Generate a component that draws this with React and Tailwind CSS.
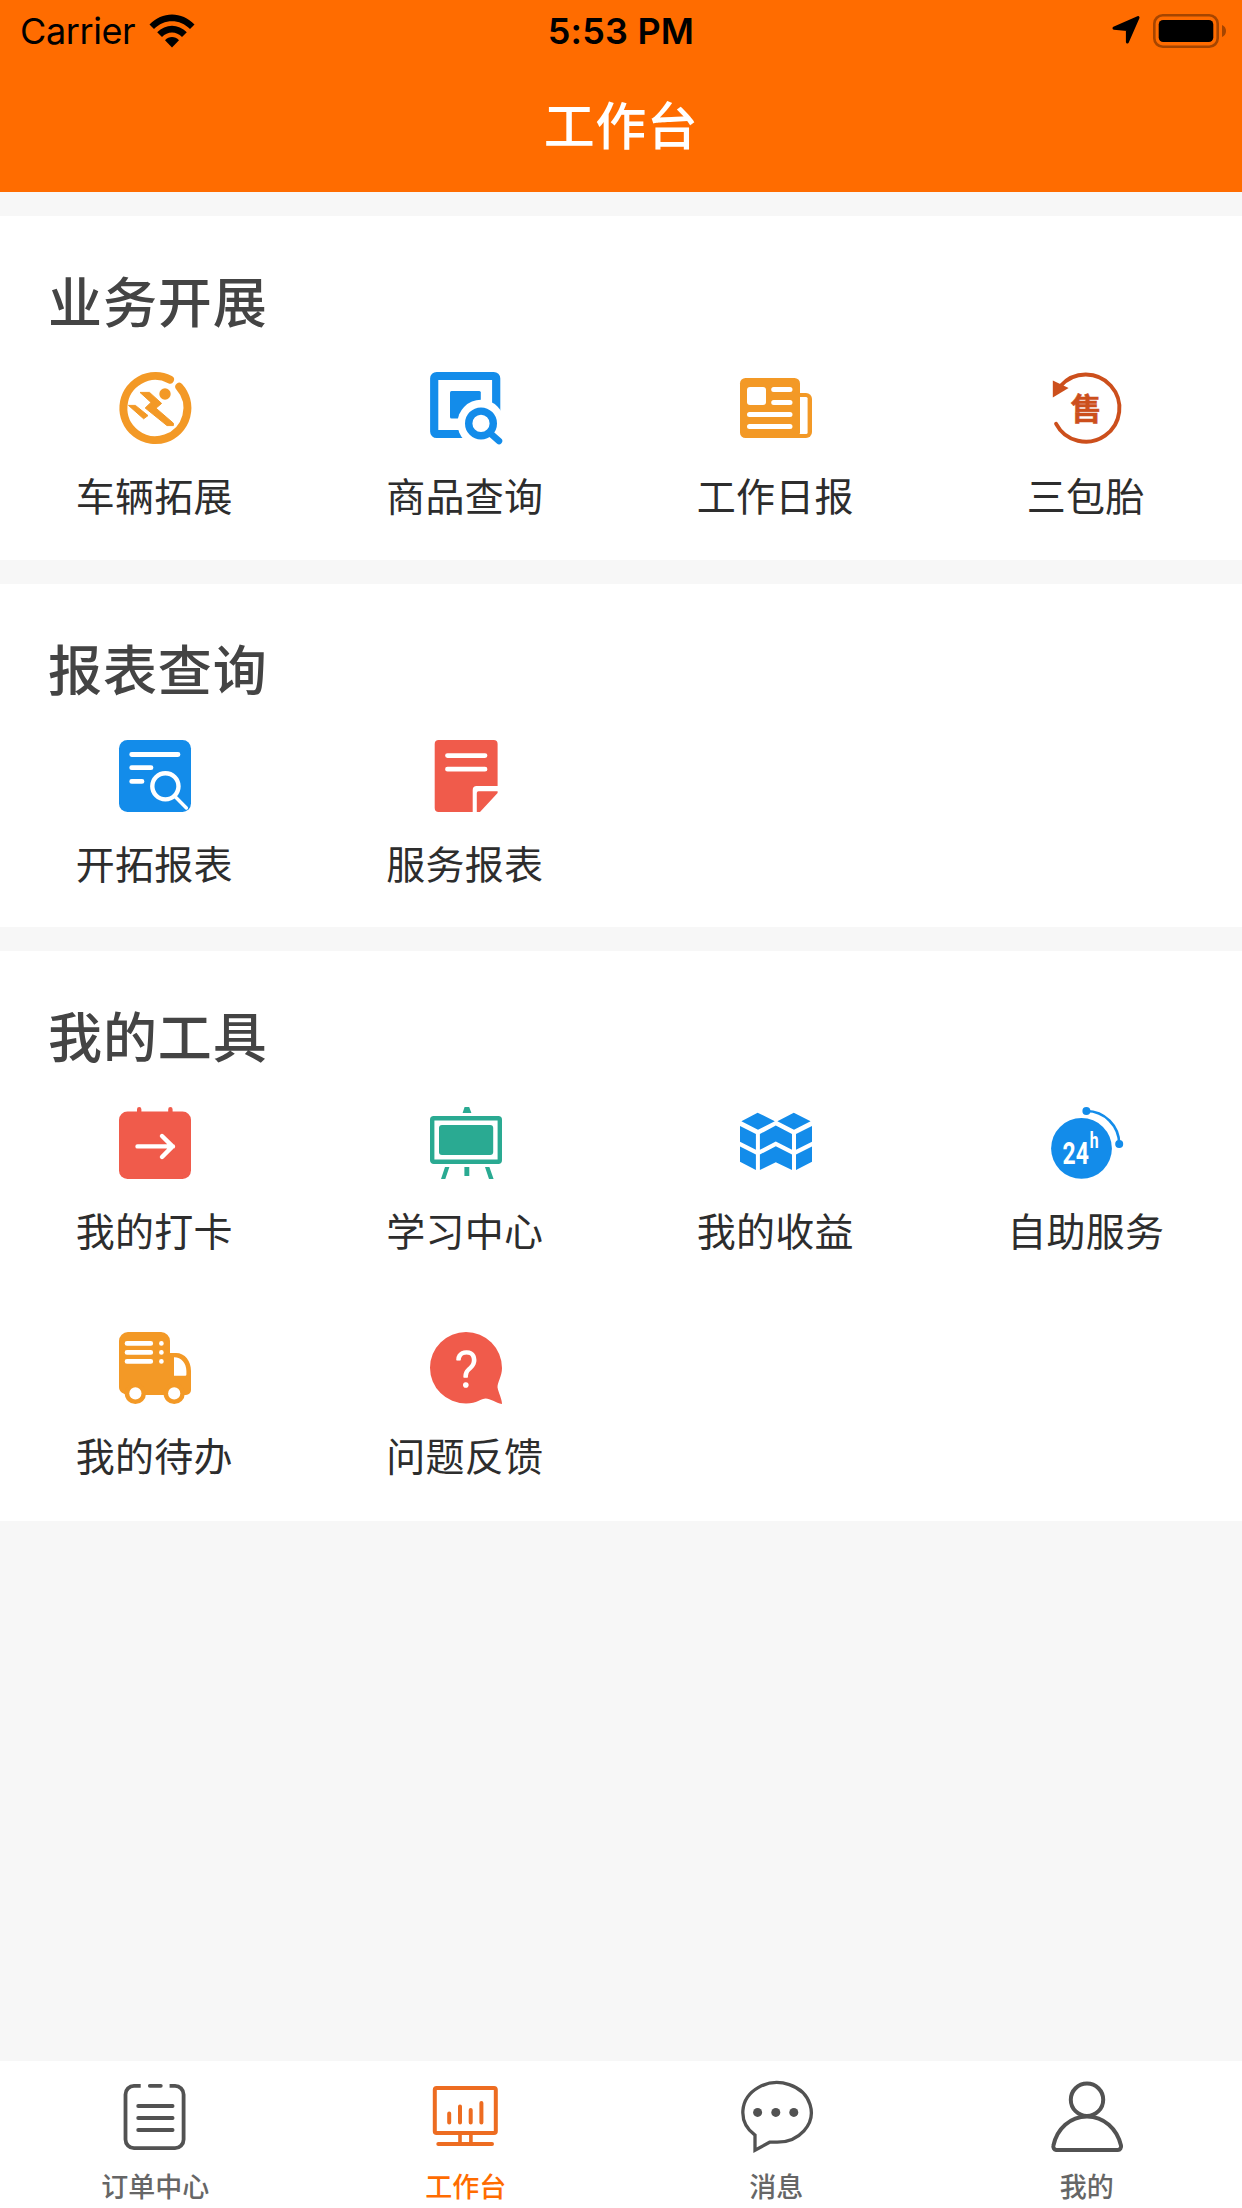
const ORANGE = '#f39926';
const BLUE = '#138cea';
const RED = '#f05b4b';
const GREEN = '#2aaa92';
const RUST = '#cc4f1c';
const GRAY = '#525252';
const ACTIVE = '#ed6c21';

function Icon({ children }) {
  return (
    <svg viewBox="0 0 72 72" className="block size-[72px] overflow-visible" fill="none">
      {children}
    </svg>
  );
}

const RunnerIcon = () => (
  <Icon>
    <path d="M60.3 14.8A32 32 0 1 1 51 7.6" stroke={ORANGE} strokeWidth="8" strokeLinecap="round" />
    <circle cx="46" cy="22" r="5.7" fill={ORANGE} />
    <path
      d="M21 20.4H30.5L42.6 31.4 37 36.2 54.4 51.2V53.6H48L26.2 36 32 30.4ZM9.5 33.4H16.4L29 43.6 24.6 46.8Z"
      fill={ORANGE}
      stroke={ORANGE}
      strokeWidth="1"
      strokeLinejoin="round"
    />
  </Icon>
);

const ProductSearchIcon = () => (
  <Icon>
    <rect x="4.2" y="4" width="62" height="58" rx="2.5" stroke={BLUE} strokeWidth="8.2" />
    <rect x="20" y="19" width="30.8" height="27.4" rx="1.5" fill={BLUE} />
    <circle cx="51" cy="51.4" r="23.6" fill="#fff" />
    <path d="M60.5 61.5L69 69" stroke={BLUE} strokeWidth="6.5" strokeLinecap="round" />
    <circle cx="51" cy="51.4" r="12.3" stroke={BLUE} strokeWidth="7.4" />
  </Icon>
);

const NewsIcon = () => (
  <Icon>
    <path d="M58 21H66A6 6 0 0 1 72 27V60A6 6 0 0 1 66 66H54V21Z" fill={ORANGE} />
    <rect x="56" y="25" width="11.6" height="37" rx="1.5" fill="#fff" />
    <rect y="6" width="60" height="60" rx="5.5" fill={ORANGE} />
    <rect x="7" y="15" width="19" height="18" rx="3" fill="#fff" />
    <path d="M33.7 17.5H50M33.7 30.5H50M9.5 42.5H50M9.5 54.5H50" stroke="#fff" strokeWidth="5" strokeLinecap="round" />
  </Icon>
);

const AfterSaleIcon = () => (
  <Icon>
    <path d="M5.1 51.8A33.6 33.6 0 1 0 9.5 14" stroke={RUST} strokeWidth="3.9" strokeLinecap="round" />
    <path d="M1.8 8.5L17.6 16 1.8 25.4Z" fill={RUST} />
    <text
      x="35.1"
      y="48"
      textAnchor="middle"
      fontSize="31"
      fontWeight="700"
      fontFamily="'Noto Sans CJK SC', sans-serif"
      fill={RUST}
      stroke={RUST}
      strokeWidth="0.5"
    >
      售
    </text>
  </Icon>
);

const ReportSearchIcon = () => (
  <Icon>
    <rect width="72" height="72" rx="8.5" fill={BLUE} />
    <path d="M12.7 14.5H59M12.7 27.7H32M12.7 41.4H23" stroke="#fff" strokeWidth="4.8" strokeLinecap="round" />
    <circle cx="46.4" cy="46.3" r="13.1" stroke="#fff" strokeWidth="4.4" />
    <path d="M56 56.5L67.4 68" stroke="#fff" strokeWidth="3.4" strokeLinecap="round" />
  </Icon>
);

const NoteIcon = () => (
  <Icon>
    <path d="M8.7 0H63.6A4 4 0 0 1 67.6 4V46H46.7A4 4 0 0 0 42.7 50V72H8.7A4 4 0 0 1 4.7 68V4A4 4 0 0 1 8.7 0Z" fill={RED} />
    <path d="M17.5 15.6H55M17.5 29.2H55" stroke="#fff" strokeWidth="4.8" strokeLinecap="round" />
    <path d="M48.5 51.2H67.6V53L50 72H46.8V53A1.8 1.8 0 0 1 48.5 51.2Z" fill={RED} />
  </Icon>
);

const ClockInIcon = () => (
  <Icon>
    <path d="M20.2 8V2.2M51.4 8V2.2" stroke={RED} strokeWidth="4.4" strokeLinecap="round" />
    <rect y="4.4" width="72" height="67.6" rx="8.5" fill={RED} />
    <path d="M18.5 39.4H54M43 29L53.5 39.4 43 50" stroke="#fff" strokeWidth="4.4" strokeLinecap="round" strokeLinejoin="round" />
  </Icon>
);

const BoardIcon = () => (
  <Icon>
    <path d="M34.6 0H39.2L41.4 6H32.6ZM15 60H19.4L15.3 72H11ZM34.4 60H39.3V69H34.4ZM55 60H59.4L63.6 72H59Z" fill={GREEN} />
    <rect x="2.2" y="11.2" width="67.6" height="43.6" rx="1.5" stroke={GREEN} strokeWidth="4.4" />
    <rect x="9" y="18" width="54.2" height="30" rx="3" fill={GREEN} />
  </Icon>
);

const BoxesIcon = () => (
  <Icon>
    <path
      d="M1.4 14.2L17.6 5.7 34.8 14.2 18 22.7ZM37.4 14.2L53.8 5.7 70.6 14.2 54 22.7ZM0 19L15.9 27V42.8L0 34.8ZM0 39.6L15.9 47.5V63L0 54.8ZM19.9 27L35.8 18.5 52 27V42.8L35.8 34.6 19.9 42.8ZM19.9 47.5L35.8 39.2 52 47.5V63L35.8 55.2 19.9 63ZM56 27L72 19V34.8L56 42.8ZM56 47.5L72 39.6V54.8L56 63Z"
      fill={BLUE}
    />
  </Icon>
);

const AllDayIcon = () => (
  <Icon>
    <circle cx="30.5" cy="41.4" r="30.4" fill={BLUE} />
    <circle cx="35.4" cy="4" r="4" fill={BLUE} />
    <circle cx="68.2" cy="37" r="4" fill={BLUE} />
    <path d="M35.4 4A33 33 0 0 1 68.2 37" stroke={BLUE} strokeWidth="2.6" />
    <text transform="translate(11.6 56.5) scale(0.74 1)" fill="#fff" fontFamily="Roboto, sans-serif" fontWeight="700" fontSize="31">
      24
      <tspan dx="1" dy="-15.5" fontSize="21.5">
        h
      </tspan>
    </text>
  </Icon>
);

const TruckIcon = () => (
  <Icon>
    <path
      d="M9 0H42A9 9 0 0 1 51 9V21H57C66 21 72 29 72 39V58A5 5 0 0 1 67 63H7C4 61 0 60 0 55V9A9 9 0 0 1 9 0Z"
      fill={ORANGE}
    />
    <circle cx="16.4" cy="61.4" r="10.6" fill={ORANGE} />
    <circle cx="55.2" cy="61.4" r="10.6" fill={ORANGE} />
    <circle cx="16.4" cy="61.4" r="6.1" fill="#fff" />
    <circle cx="55.2" cy="61.4" r="6.1" fill="#fff" />
    <path d="M55 25.2C62 25 67.4 31 67.4 39V42.5A1.3 1.3 0 0 1 66.2 43.8H55Z" fill="#fff" />
    <path d="M8 11.4H31.8M8 20.4H31.8M8 29.4H31.8M42.4 11.4h.01M42.4 20.4h.01M42.4 29.4h.01" stroke="#fff" strokeWidth="4.7" strokeLinecap="round" />
  </Icon>
);

const FeedbackIcon = () => (
  <Icon>
    <path d="M36 0A36 36 0 0 1 72 36C72 44 67.5 50 67.5 55.3 68.5 61 72 67 72 72 66 71 60 66.6 55.8 66.6 51 66.6 47 71.6 36 71.6A36 35.8 0 0 1 36 0Z" fill={RED} />
    <text
      x="36.4"
      y="55"
      textAnchor="middle"
      fontSize="50"
      fontWeight="300"
      fontFamily="Roboto, sans-serif"
      fill="#fff"
      stroke="#fff"
      strokeWidth="1.6"
      strokeLinejoin="round"
    >
      ?
    </text>
  </Icon>
);

const OrdersIcon = () => (
  <Icon>
    <path d="M21.7 4.8H15A8.6 8.6 0 0 0 6.5 13.4V58.6A8.6 8.6 0 0 0 15 67.2H56A8.6 8.6 0 0 0 64.6 58.6V13.4A8.6 8.6 0 0 0 56 4.8H50.6" stroke={GRAY} strokeWidth="3.8" />
    <path d="M30.8 4.8H41.8M19.2 25H53.6M19.2 37H53.6M19.2 49H53.6" stroke={GRAY} strokeWidth="3.8" strokeLinecap="round" />
  </Icon>
);

const WorkbenchIcon = () => (
  <Icon>
    <rect x="4.8" y="7" width="61" height="45" rx="1.8" stroke={ACTIVE} strokeWidth="4" />
    <path d="M19.2 32.5V41.5M30 25.5V41.5M40.7 29V41.5M51.4 22V41.5M8.3 63H62" stroke={ACTIVE} strokeWidth="4" strokeLinecap="round" />
    <path d="M30 53V62M40.9 53V62" stroke={ACTIVE} strokeWidth="3.6" />
  </Icon>
);

const MessageIcon = () => (
  <Icon>
    <path d="M15 54.2A34.2 29.8 0 1 1 36 61.2H29.6L15 69.2Z" stroke={GRAY} strokeWidth="3.3" />
    <circle cx="17.6" cy="31.4" r="4.5" fill={GRAY} />
    <circle cx="35.8" cy="31.4" r="4.5" fill={GRAY} />
    <circle cx="53.8" cy="31.4" r="4.5" fill={GRAY} />
  </Icon>
);

const PersonIcon = () => (
  <Icon>
    <circle cx="36" cy="18.7" r="16.2" stroke={GRAY} strokeWidth="4" />
    <path d="M36 35.5C53 35.5 66 48 70 64.5A3.6 3.6 0 0 1 66.8 69H5.2A3.6 3.6 0 0 1 2.4 64.5C6 48 19 35.5 36 35.5Z" stroke={GRAY} strokeWidth="4" />
  </Icon>
);

const SECTIONS = [
  {
    title: '业务开展',
    height: 'h-[344px]',
    items: [
      ['车辆拓展', RunnerIcon],
      ['商品查询', ProductSearchIcon],
      ['工作日报', NewsIcon],
      ['三包胎', AfterSaleIcon],
    ],
  },
  {
    title: '报表查询',
    height: 'h-[343px]',
    items: [
      ['开拓报表', ReportSearchIcon],
      ['服务报表', NoteIcon],
    ],
  },
  {
    title: '我的工具',
    height: 'h-[570px]',
    items: [
      ['我的打卡', ClockInIcon],
      ['学习中心', BoardIcon],
      ['我的收益', BoxesIcon],
      ['自助服务', AllDayIcon],
      ['我的待办', TruckIcon],
      ['问题反馈', FeedbackIcon],
    ],
  },
];

const TABS = [
  ['订单中心', OrdersIcon],
  ['工作台', WorkbenchIcon, true],
  ['消息', MessageIcon],
  ['我的', PersonIcon],
];

function StatusBar() {
  return (
    <div className="grid h-[60px] grid-cols-3 items-center px-[16px] pt-px font-['Inter',sans-serif] text-[36px] leading-[60px] text-black">
      <div className="flex items-center gap-[13px] pl-[4px]">
        <span className="w-[116px] tracking-[-0.4px]">Carrier</span>
        <svg viewBox="0 0 46 34" className="-mt-[1px] h-[34px] w-[46px]">
          <path d="M0.5 10.5C13 -3 33 -3 45.5 10.5L41 15C31 4.600 15 4.600 5 15Z" />
          <path d="M8.200 18.300C16.500 9.500 29.500 9.500 37.800 18.300L33 23C27.500 17 18.500 17 13 23Z" />
          <path d="M16 26.200C20 22 26 22 30 26.200L23 33.500Z" />
        </svg>
      </div>
      <div className="text-center font-semibold tracking-[0.2px] whitespace-nowrap">5:53 PM</div>
      <div className="-mt-px flex items-center justify-end gap-[12px]">
        <svg viewBox="0 0 29 29" className="h-[29px] w-[29px]">
          <path d="M2 12.200L26 1.600 15.400 26V13.600Z" stroke="#000" strokeWidth="3" strokeLinejoin="round" />
        </svg>
        <svg viewBox="0 0 73 34" className="h-[34px] w-[73px]">
          <rect x="1.300" y="1.300" width="63.400" height="31.400" rx="8.500" fill="none" stroke="#a64500" strokeWidth="2.600" />
          <rect x="5.700" y="6" width="54.600" height="22" rx="4.500" />
          <path d="M69 11C71.500 12 73 14 73 17S71.500 22 69 23Z" fill="#a64500" />
        </svg>
      </div>
    </div>
  );
}

function Section({ title, height, items }) {
  return (
    <section className={`${height} bg-white`}>
      <h2 className="h-[119px] pt-[54px] pl-[48px] text-[54px] leading-[60px] font-medium tracking-[0.9px] text-[#444]">{title}</h2>
      <div className="grid grid-cols-4">
        {items.map(([label, Glyph]) => (
          <div key={label} className="flex h-[225px] flex-col items-center pt-[37px]">
            <Glyph />
            <span className="mt-[30px] mr-[2px] text-[39px] leading-[40px] tracking-[0.3px] whitespace-nowrap text-[#2d2d2d]">{label}</span>
          </div>
        ))}
      </div>
    </section>
  );
}

export default function App() {
  return (
    <div className="flex h-[2208px] w-[1242px] flex-col overflow-hidden bg-[#f7f7f7] font-['Noto_Sans_CJK_SC',sans-serif]">
      <header className="h-[192px] shrink-0 bg-[#ff6c00]">
        <StatusBar />
        <h1 className="text-center text-[51px] leading-[126px] font-medium tracking-[0.5px] text-white">工作台</h1>
      </header>
      <main className="flex flex-1 flex-col gap-[24px] pt-[24px]">
        {SECTIONS.map((section) => (
          <Section key={section.title} {...section} />
        ))}
      </main>
      <nav className="grid h-[147px] shrink-0 grid-cols-4 bg-white">
        {TABS.map(([label, Glyph, active]) => (
          <div key={label} className="flex flex-col items-center pt-[20px]">
            <Glyph />
            <span className={`mt-[18px] text-[27px] leading-[30px] font-medium whitespace-nowrap ${active ? 'text-[#ff6c00]' : 'text-[#666]'}`}>{label}</span>
          </div>
        ))}
      </nav>
    </div>
  );
}
